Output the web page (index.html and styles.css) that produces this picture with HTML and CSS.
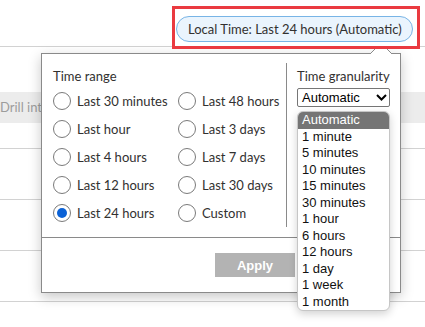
FILE: index.html
```html
<!DOCTYPE html>
<html lang="en">
<head>
  <meta charset="UTF-8">
  <meta name="viewport" content="width=device-width, initial-scale=1.0">
  <title>Time picker</title>
  <link rel="stylesheet" href="styles.css">
</head>
<body>
  <div class="page">
    <header class="toolbar">
      <div class="callout">
        <button class="time-pill">Local Time: Last 24 hours (Automatic)</button>
      </div>
    </header>

    <div class="grid">
      <div class="grid-head">Drill into</div>
      <div class="grid-row short"></div>
      <div class="grid-row"></div>
      <div class="grid-row"></div>
      <div class="grid-row"></div>
    </div>

    <div class="time-popup">
      <svg class="notch" width="24" height="12" viewBox="0 0 24 12">
        <path d="M0.5 12.5 L12 1 L23.5 12.5" fill="#fff" stroke="#8a8a8a" stroke-width="1"/>
      </svg>

      <div class="popup-body">
        <div class="range">
          <div class="label">Time range</div>
          <div class="radio-grid">
            <label class="radio"><span class="dot"></span>Last 30 minutes</label>
            <label class="radio"><span class="dot"></span>Last 48 hours</label>
            <label class="radio"><span class="dot"></span>Last hour</label>
            <label class="radio"><span class="dot"></span>Last 3 days</label>
            <label class="radio"><span class="dot"></span>Last 4 hours</label>
            <label class="radio"><span class="dot"></span>Last 7 days</label>
            <label class="radio"><span class="dot"></span>Last 12 hours</label>
            <label class="radio"><span class="dot"></span>Last 30 days</label>
            <label class="radio"><span class="dot checked"></span>Last 24 hours</label>
            <label class="radio"><span class="dot"></span>Custom</label>
          </div>
        </div>

        <div class="granularity">
          <div class="label">Time granularity</div>
          <div class="select">
            <span>Automatic</span>
            <svg width="11" height="7" viewBox="0 0 11 7">
              <polyline points="1,1 5.5,5.5 10,1" fill="none" stroke="#000" stroke-width="2"/>
            </svg>
          </div>
          <ul class="options">
            <li class="active">Automatic</li>
            <li>1 minute</li>
            <li>5 minutes</li>
            <li>10 minutes</li>
            <li>15 minutes</li>
            <li>30 minutes</li>
            <li>1 hour</li>
            <li>6 hours</li>
            <li>12 hours</li>
            <li>1 day</li>
            <li>1 week</li>
            <li>1 month</li>
          </ul>
        </div>
      </div>

      <div class="popup-footer">
        <button class="btn">Apply</button>
      </div>
    </div>
  </div>
</body>
</html>
```

FILE: styles.css
```css
* {
  margin: 0;
  padding: 0;
  box-sizing: border-box;
}
body {
  background: #fff;
  font-family: 'Lato', sans-serif;
  font-size: 13px;
  color: #323130;
}
.page {
  position: relative;
  width: 425px;
  height: 327px;
  overflow: hidden;
}
.toolbar {
  height: 47px;
  border-bottom: 1px solid #d2d2d2;
  display: flex;
  justify-content: flex-end;
  align-items: flex-start;
  padding: 6px 5px 0 0;
}
.callout {
  border: 3px solid #ea3a40;
  width: 248px;
  height: 43px;
  padding: 7px 4px 0 1px;
  background: #fff;
  position: relative;
  z-index: 2;
}
.time-pill {
  display: block;
  width: 237px;
  height: 26px;
  border: 1px solid #78b4e6;
  border-radius: 13px;
  background: #eaf4fd;
  color: #323130;
  font-family: inherit;
  font-size: 13px;
  text-align: left;
  padding: 0 0 1px 11px;
  white-space: nowrap;
}

/* table behind the popup */
.grid {
  margin-top: 45px;
}
.grid-head {
  height: 31px;
  background: #ececec;
  color: #9c9c9c;
  line-height: 30px;
  padding-left: 0;
  white-space: nowrap;
  overflow: hidden;
}
.grid-row {
  height: 51px;
  border-bottom: 1px solid #d2d2d2;
}
.grid-row.short {
  height: 26px;
}

/* popup */
.time-popup {
  position: absolute;
  left: 41px;
  top: 53px;
  width: 360px;
  height: 240px;
  background: #fff;
  border: 1px solid #8a8a8a;
  box-shadow: 0 4px 12px rgba(0, 0, 0, 0.22);
  z-index: 1;
}
.notch {
  position: absolute;
  top: -12px;
  left: 327px;
  display: block;
}
.popup-body {
  display: flex;
  height: 184px;
  border-bottom: 1px solid #8a8a8a;
}
.range {
  width: 244px;
  padding: 13px 0 0 11px;
}
.label {
  line-height: 18px;
}
.radio-grid {
  display: grid;
  grid-template-columns: 125px auto;
  row-gap: 10px;
  margin-top: 7px;
}
.radio {
  display: flex;
  align-items: center;
  gap: 6px;
  height: 18px;
  white-space: nowrap;
}
.dot {
  width: 18px;
  height: 18px;
  border: 1px solid #7a7a7a;
  border-radius: 50%;
  display: flex;
  align-items: center;
  justify-content: center;
  flex-shrink: 0;
}
.dot.checked::after {
  content: "";
  width: 10px;
  height: 10px;
  border-radius: 50%;
  background: #0b62d6;
}
.granularity {
  position: relative;
  margin: 9px 0 10px;
  border-left: 1px solid #8a8a8a;
  padding: 4px 0 0 10px;
  flex: 1;
}
.select {
  margin-top: 3px;
  width: 93px;
  height: 19px;
  border: 1px solid #767676;
  border-radius: 2px;
  display: flex;
  align-items: center;
  justify-content: space-between;
  padding: 0 2px 0 4px;
  font-family: 'Liberation Sans', Arial, sans-serif;
  color: #000;
}
.options {
  list-style: none;
  position: absolute;
  left: 10px;
  top: 48px;
  width: 93px;
  background: #fff;
  border: 1px solid #c6c6c6;
  border-radius: 6px;
  overflow: hidden;
  box-shadow: 0 3px 8px rgba(0, 0, 0, 0.18);
  font-family: 'Liberation Sans', Arial, sans-serif;
  color: #111;
}
.options li {
  height: 16.5px;
  line-height: 16.5px;
  padding-left: 4px;
}
.options li.active {
  background: #757575;
  color: #fff;
}
.popup-footer {
  padding: 15px 0 0 173px;
}
.btn {
  width: 80px;
  height: 24px;
  border: none;
  background: #b3b3b3;
  color: #fff;
  font-family: 'Liberation Sans', Arial, sans-serif;
  font-weight: bold;
  font-size: 13px;
}
```
